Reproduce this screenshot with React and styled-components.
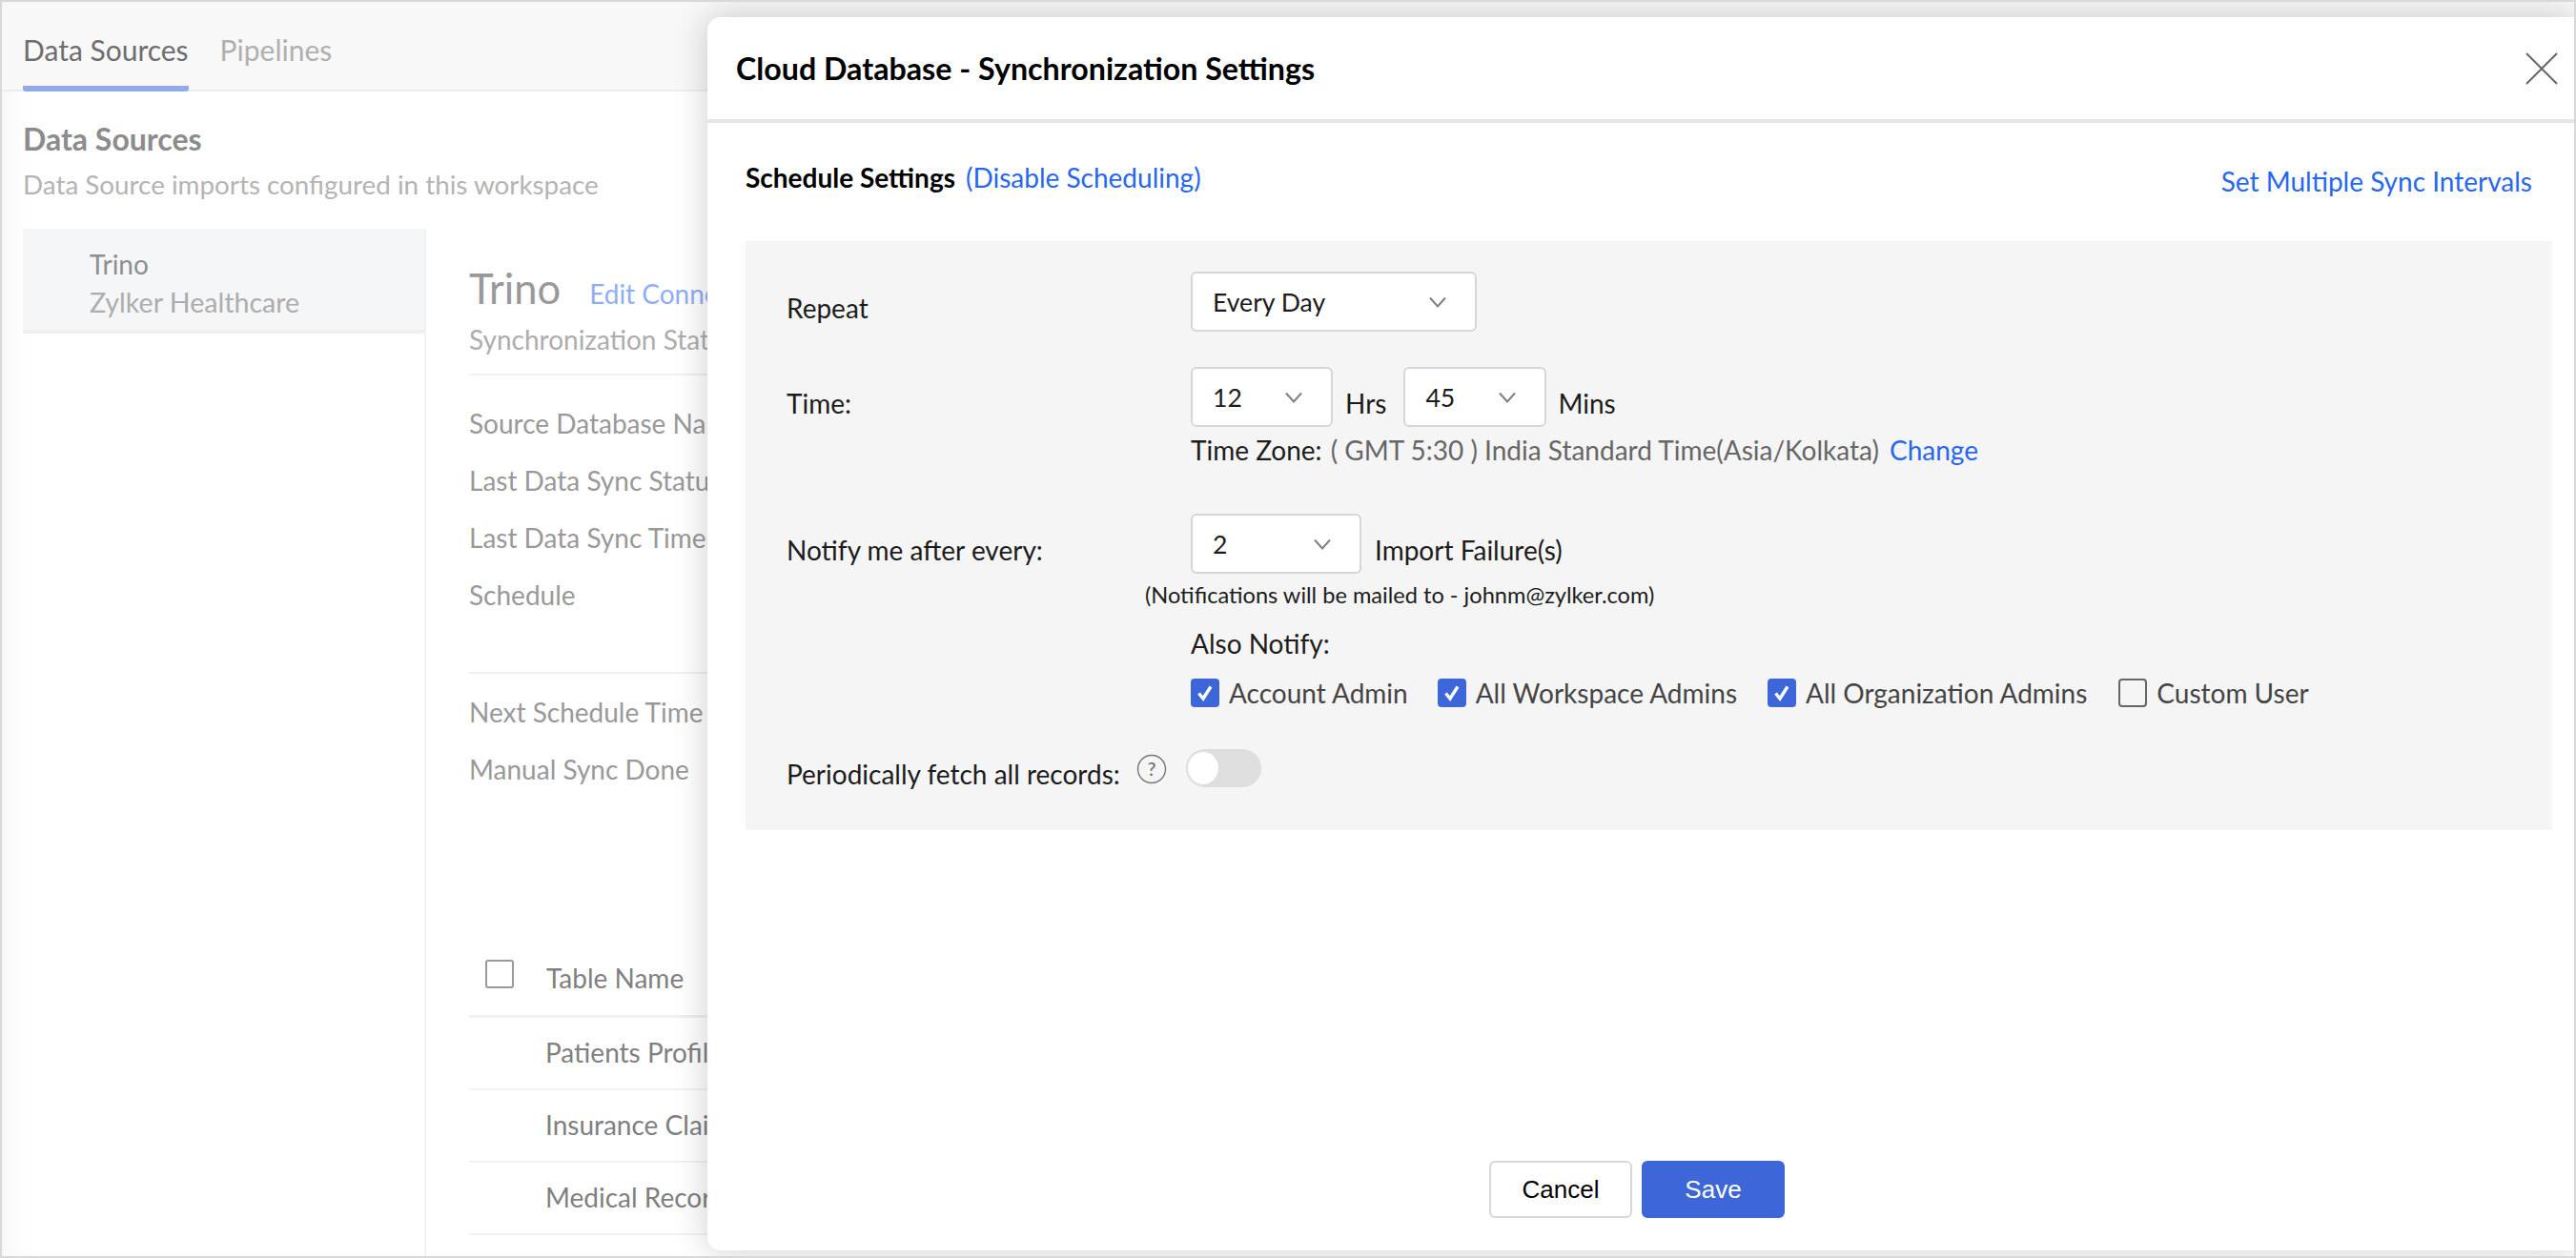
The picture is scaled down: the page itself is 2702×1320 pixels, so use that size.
import React from "react";
import styled, { createGlobalStyle } from "styled-components";

const Global = createGlobalStyle`
  html, body { margin: 0; padding: 0; width: 2702px; height: 1320px; overflow: hidden; background: #fff; }
  body { font-family: "Lato", "Liberation Sans", sans-serif; }
  * { box-sizing: border-box; }
`;

const Page = styled.div`
  position: relative;
  width: 2702px;
  height: 1320px;
  border: 2px solid #d8d8d8;
  background: #fff;
  overflow: hidden;
  box-shadow: inset 40px 0 40px -40px rgba(0, 0, 0, 0.06);
`;
const TabBar = styled.div`
  height: 94px;
  background: #f8f8f8;
  border-bottom: 2px solid #eeeeee;
  padding-left: 22px;
  display: flex;
  gap: 33px;
`;
const Tab = styled.div`
  height: 94px;
  padding-top: 30px;
  font-size: 30px;
  line-height: 40px;
  color: ${(p) => (p.$active ? "#6e6e6e" : "#b0b0b0")};
  border-bottom: 6px solid ${(p) => (p.$active ? "#93aae8" : "transparent")};
  border-radius: 0 0 3px 3px;
`;
const Intro = styled.div`
  padding: 30px 0 0 22px;
`;
const IntroTitle = styled.div`
  font-size: 32px;
  line-height: 40px;
  font-weight: 700;
  color: #8c8c8c;
`;
const IntroSub = styled.div`
  margin-top: 8px;
  font-size: 27.8px;
  line-height: 40px;
  color: #b4b4b4;
`;
const Main = styled.div`
  display: flex;
  margin-top: 26px;
  padding-left: 22px;
  height: 1078px;
`;
const Sidebar = styled.div`
  width: 423px;
  flex: none;
  border-right: 2px solid #f2f2f2;
`;
const SideItem = styled.div`
  height: 110px;
  padding: 17px 0 0 70px;
  background: #f5f6f8;
  border-bottom: 4px solid #f0f0f0;
  font-size: 28px;
  line-height: 40px;
`;
const SideLine = styled.div`
  color: ${(p) => (p.$muted ? "#adadad" : "#8e8e8e")};
  font-size: ${(p) => (p.$muted ? "28.6px" : "28px")};
`;
const Detail = styled.div`
  width: 1200px;
  padding-left: 45px;
  flex: none;
`;
const DetailHead = styled.div`
  display: flex;
  align-items: baseline;
  gap: 30px;
  margin-top: 37px;
`;
const DetailTitle = styled.div`
  font-size: 43.5px;
  line-height: 50px;
  color: #999;
`;
const EditLink = styled.div`
  font-size: 28px;
  color: #8fadf7;
`;
const SyncLine = styled.div`
  margin-top: 9px;
  font-size: 28px;
  line-height: 40px;
  color: #adadad;
`;
const Rule = styled.div`
  height: 2px;
  margin-top: ${(p) => p.$mt}px;
  background: #f0f0f0;
`;
const InfoList = styled.div`
  display: flex;
  flex-direction: column;
  gap: 20px;
  margin-top: ${(p) => p.$mt}px;
`;
const InfoItem = styled.div`
  font-size: 28px;
  line-height: 40px;
  color: #999;
  white-space: nowrap;
`;
const TableHead = styled.div`
  display: flex;
  align-items: center;
  height: 79px;
  margin-top: 162px;
  border-bottom: 3px solid #f0f0f0;
`;
const HeadCheck = styled.div`
  width: 30px;
  height: 30px;
  margin: 0 34px 10px 17px;
  border: 2px solid #9a9a9a;
  border-radius: 3px;
  background: #fff;
`;
const HeadName = styled.div`
  font-size: 28px;
  color: #808080;
  margin-bottom: 2px;
`;
const TableRow = styled.div`
  height: 76px;
  padding: 16px 0 0 80px;
  border-bottom: 2px solid #f2f2f2;
  font-size: 28px;
  line-height: 40px;
  color: #808080;
`;

const Modal = styled.div`
  position: absolute;
  left: 740px;
  top: 16px;
  width: 1958px;
  height: 1294px;
  background: #fff;
  border-radius: 14px 0 0 14px;
  box-shadow: 0 0 36px rgba(0, 0, 0, 0.2);
  display: flex;
  flex-direction: column;
`;
const ModalHeader = styled.div`
  height: 111px;
  flex: none;
  border-bottom: 4px solid #e6e6e6;
  padding: 0 17px 0 30px;
  display: flex;
  align-items: center;
  justify-content: space-between;
`;
const ModalTitle = styled.div`
  font-size: 32.2px;
  font-weight: 700;
  color: #000;
`;
const ModalBody = styled.div`
  padding: 37px 23px 0 40px;
`;
const ScheduleHead = styled.div`
  display: flex;
  justify-content: space-between;
  align-items: flex-start;
  height: 87px;
`;
const ScheduleLeft = styled.div`
  display: flex;
  gap: 11px;
  font-size: 28px;
  line-height: 40px;
`;
const ScheduleTitle = styled.div`
  font-weight: 700;
  color: #000;
`;
const BlueLink = styled.span`
  color: #2767ee;
  font-size: 28px;
  line-height: 40px;
  margin-left: ${(p) => p.$ml || 0}px;
`;
const RightLink = styled(BlueLink)`
  margin: 4px 21px 0 0;
`;
const Panel = styled.div`
  background: #f5f5f5;
  padding: 32px 0 39px 43px;
`;
const FormRow = styled.div`
  display: grid;
  grid-template-columns: 424px 1fr;
  margin-top: ${(p) => p.$mt || 0}px;
`;
const Label = styled.div`
  padding-top: 18px;
  font-size: 28px;
  line-height: 40px;
  color: #1c1c1c;
`;
const Controls = styled.div`
  display: flex;
  align-items: flex-start;
`;
const SelectBox = styled.div`
  width: ${(p) => p.$w}px;
  height: 63px;
  margin-left: ${(p) => p.$ml || 0}px;
  padding: 0 30px 0 21px;
  background: #fff;
  border: 2px solid #d6d6d6;
  border-radius: 6px;
  display: flex;
  align-items: center;
  justify-content: space-between;
  font-size: 26.6px;
  color: #1c1c1c;
`;
const Unit = styled.div`
  margin-left: ${(p) => p.$ml}px;
  padding-top: 18px;
  font-size: 28px;
  line-height: 40px;
  color: #1c1c1c;
`;
const SubLine = styled.div`
  margin-top: ${(p) => p.$mt}px;
  font-size: 28px;
  line-height: 40px;
  color: #1c1c1c;
  white-space: nowrap;
`;
const Muted = styled.span`
  color: #666;
  margin-left: 9px;
`;
const Note = styled.div`
  margin: 4px 0 0 -48px;
  font-size: 23.6px;
  line-height: 36px;
  color: #1c1c1c;
  white-space: nowrap;
`;
const CheckRow = styled.div`
  display: flex;
  margin-top: 17px;
`;
const CheckItem = styled.div`
  display: flex;
  align-items: center;
  height: 30px;
  margin-right: ${(p) => p.$mr || 0}px;
  font-size: 28px;
  color: #444;
  white-space: nowrap;
`;
const Box = styled.span`
  width: 30px;
  height: 30px;
  margin-right: 10px;
  border-radius: 4px;
  background: ${(p) => (p.$on ? "#3d66d8" : "transparent")};
  border: ${(p) => (p.$on ? "none" : "2px solid #666")};
  display: flex;
  align-items: center;
  justify-content: center;
`;
const FetchRow = styled.div`
  display: flex;
  align-items: flex-start;
  margin-top: 44px;
`;
const FetchLabel = styled.div`
  margin-top: 6px;
  font-size: 28px;
  line-height: 40px;
  color: #1c1c1c;
`;
const Help = styled.svg`
  width: 32px;
  height: 32px;
  margin: 5px 20px 0 17px;
  flex: none;
`;
const Toggle = styled.div`
  position: relative;
  width: 79px;
  height: 40px;
  border-radius: 20px;
  background: #dedede;
`;
const Knob = styled.div`
  position: absolute;
  left: 2px;
  top: 3px;
  width: 32px;
  height: 34px;
  border-radius: 50%;
  background: #fff;
`;
const Footer = styled.div`
  margin-top: auto;
  padding: 0 8px 34px 0;
  display: flex;
  justify-content: center;
  gap: 10px;
`;
const Btn = styled.div`
  width: 150px;
  height: 60px;
  display: flex;
  align-items: center;
  justify-content: center;
  border-radius: 6px;
  font-family: "Liberation Sans", sans-serif;
  font-size: 26px;
  color: ${(p) => (p.$primary ? "#fff" : "#000")};
  background: ${(p) => (p.$primary ? "#3d66d8" : "#fff")};
  border: 2px solid ${(p) => (p.$primary ? "#3d66d8" : "#d8d8d8")};
`;

const Chevron = () => (
  <svg width="18" height="12" viewBox="0 0 18 12" fill="none">
    <path d="M1 1.5 L9 10.5 L17 1.5" stroke="#808080" strokeWidth="2" />
  </svg>
);
const Tick = () => (
  <svg width="20" height="20" viewBox="0 0 20 20" fill="none">
    <path d="M3.5 10.5 L8 16 L16 3.5" stroke="#fff" strokeWidth="3.4" />
  </svg>
);
const Close = () => (
  <svg width="34" height="34" viewBox="0 0 34 34" fill="none">
    <path d="M1 1 L33 33 M33 1 L1 33" stroke="#666" strokeWidth="2" />
  </svg>
);
const Select = ({ w, ml, children }) => (
  <SelectBox $w={w} $ml={ml}>
    <span>{children}</span>
    <Chevron />
  </SelectBox>
);
const Check = ({ on, mr, children }) => (
  <CheckItem $mr={mr}>
    <Box $on={on}>{on && <Tick />}</Box>
    {children}
  </CheckItem>
);

export default function App() {
  return (
    <>
      <Global />
      <Page>
        <TabBar>
          <Tab $active>Data Sources</Tab>
          <Tab>Pipelines</Tab>
        </TabBar>
        <Intro>
          <IntroTitle>Data Sources</IntroTitle>
          <IntroSub>Data Source imports configured in this workspace</IntroSub>
        </Intro>
        <Main>
          <Sidebar>
            <SideItem>
              <SideLine>Trino</SideLine>
              <SideLine $muted>Zylker Healthcare</SideLine>
            </SideItem>
          </Sidebar>
          <Detail>
            <DetailHead>
              <DetailTitle>Trino</DetailTitle>
              <EditLink>Edit Connection</EditLink>
            </DetailHead>
            <SyncLine>Synchronization Status</SyncLine>
            <Rule $mt={16} />
            <InfoList $mt={30}>
              <InfoItem>Source Database Name</InfoItem>
              <InfoItem>Last Data Sync Status</InfoItem>
              <InfoItem>Last Data Sync Time</InfoItem>
              <InfoItem>Schedule</InfoItem>
            </InfoList>
            <Rule $mt={61} />
            <InfoList $mt={20}>
              <InfoItem>Next Schedule Time</InfoItem>
              <InfoItem>Manual Sync Done</InfoItem>
            </InfoList>
            <TableHead>
              <HeadCheck />
              <HeadName>Table Name</HeadName>
            </TableHead>
            <TableRow>Patients Profile</TableRow>
            <TableRow>Insurance Claims</TableRow>
            <TableRow>Medical Records</TableRow>
          </Detail>
        </Main>

        <Modal>
          <ModalHeader>
            <ModalTitle>Cloud Database - Synchronization Settings</ModalTitle>
            <Close />
          </ModalHeader>
          <ModalBody>
            <ScheduleHead>
              <ScheduleLeft>
                <ScheduleTitle>Schedule Settings</ScheduleTitle>
                <BlueLink>(Disable Scheduling)</BlueLink>
              </ScheduleLeft>
              <RightLink>Set Multiple Sync Intervals</RightLink>
            </ScheduleHead>
            <Panel>
              <FormRow>
                <Label>Repeat</Label>
                <Controls>
                  <Select w={300}>Every Day</Select>
                </Controls>
              </FormRow>
              <FormRow $mt={37}>
                <Label>Time:</Label>
                <div>
                  <Controls>
                    <Select w={149}>12</Select>
                    <Unit $ml={13}>Hrs</Unit>
                    <Select w={150} ml={18}>45</Select>
                    <Unit $ml={12}>Mins</Unit>
                  </Controls>
                  <SubLine $mt={4}>
                    Time Zone:<Muted>( GMT 5:30 ) India Standard Time(Asia/Kolkata)</Muted>
                    <BlueLink $ml={11}>Change</BlueLink>
                  </SubLine>
                </div>
              </FormRow>
              <FormRow $mt={47}>
                <Label>Notify me after every:</Label>
                <div>
                  <Controls>
                    <Select w={179}>2</Select>
                    <Unit $ml={14}>Import Failure(s)</Unit>
                  </Controls>
                  <Note>(Notifications will be mailed to - johnm@zylker.com)</Note>
                  <SubLine $mt={13}>Also Notify:</SubLine>
                  <CheckRow>
                    <Check on mr={31}>Account Admin</Check>
                    <Check on mr={32}>All Workspace Admins</Check>
                    <Check on mr={33}>All Organization Admins</Check>
                    <Check>Custom User</Check>
                  </CheckRow>
                </div>
              </FormRow>
              <FetchRow>
                <FetchLabel>Periodically fetch all records:</FetchLabel>
                <Help viewBox="0 0 32 32" fill="none">
                  <circle cx="16" cy="16" r="14.5" stroke="#777" strokeWidth="1.4" />
                  <text x="16" y="23" textAnchor="middle" fontSize="20" fill="#666" fontFamily="Lato">?</text>
                </Help>
                <Toggle>
                  <Knob />
                </Toggle>
              </FetchRow>
            </Panel>
          </ModalBody>
          <Footer>
            <Btn>Cancel</Btn>
            <Btn $primary>Save</Btn>
          </Footer>
        </Modal>
      </Page>
    </>
  );
}
